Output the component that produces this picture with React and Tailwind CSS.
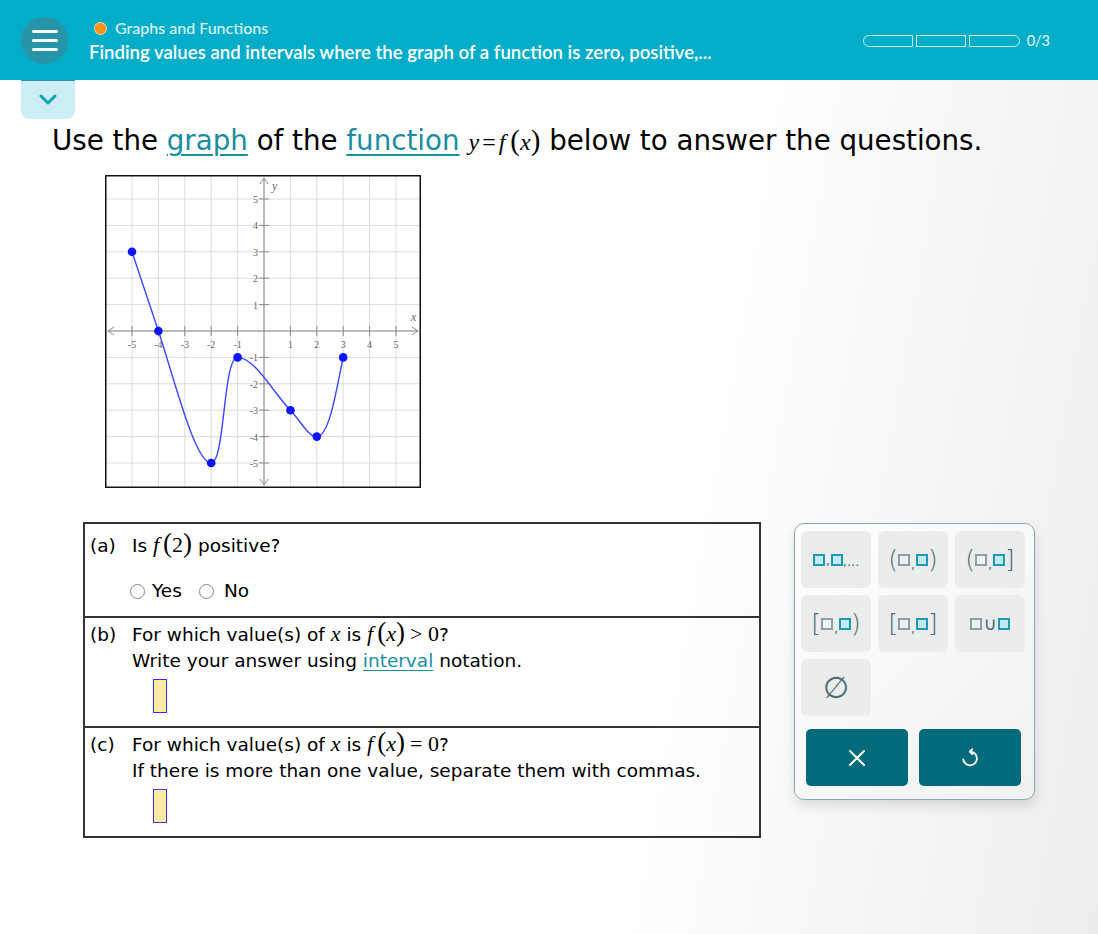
import React from "react";

const U = 26.4;
const OX = 159;
const OY = 156;
const sx = (x) => OX + U * x;
const sy = (y) => OY - U * y;

function Graph() {
  const grid = [];
  for (let i = -6; i <= 6; i++) {
    grid.push(<line key={"v" + i} x1={sx(i)} y1={0} x2={sx(i)} y2={313} stroke="#dcdcdc" strokeWidth="1" />);
    grid.push(<line key={"h" + i} x1={0} y1={sy(i)} x2={316} y2={sy(i)} stroke="#dcdcdc" strokeWidth="1" />);
  }
  const ticks = [];
  const labels = [];
  for (let i = -5; i <= 5; i++) {
    if (i === 0) continue;
    ticks.push(<line key={"tx" + i} x1={sx(i)} y1={OY - 5} x2={sx(i)} y2={OY + 5} stroke="#8a8a8a" strokeWidth="1" />);
    ticks.push(<line key={"ty" + i} x1={OX - 5} y1={sy(i)} x2={OX + 5} y2={sy(i)} stroke="#8a8a8a" strokeWidth="1" />);
    labels.push(
      <text key={"lx" + i} x={sx(i)} y={OY + 17} textAnchor="middle" fontSize="10" fill="#666" fontFamily="Liberation Serif, serif">
        {i < 0 ? "-" + -i : i}
      </text>
    );
    labels.push(
      <text key={"ly" + i} x={OX - 6} y={sy(i) + 4} textAnchor="end" fontSize="10" fill="#666" fontFamily="Liberation Serif, serif">
        {i < 0 ? "-" + -i : i}
      </text>
    );
  }
  const pts = [
    [-5, 3],
    [-4, 0],
    [-2, -5],
    [-1, -1],
    [1, -3],
    [2, -4],
    [3, -1],
  ];
  return (
    <svg width="316" height="313" viewBox="0 0 316 313" className="block">
      <rect x="0" y="0" width="316" height="313" fill="#fff" />
      {grid}
      <line x1="3" y1={OY} x2="313" y2={OY} stroke="#8a8a8a" strokeWidth="1" />
      <line x1={OX} y1="3" x2={OX} y2="310" stroke="#8a8a8a" strokeWidth="1" />
      <path d={`M9 ${OY - 4} L3 ${OY} L9 ${OY + 4}`} fill="none" stroke="#8a8a8a" strokeWidth="1" />
      <path d={`M307 ${OY - 4} L313 ${OY} L307 ${OY + 4}`} fill="none" stroke="#8a8a8a" strokeWidth="1" />
      <path d={`M${OX - 4} 9 L${OX} 3 L${OX + 4} 9`} fill="none" stroke="#8a8a8a" strokeWidth="1" />
      <path d={`M${OX - 4} 304 L${OX} 310 L${OX + 4} 304`} fill="none" stroke="#8a8a8a" strokeWidth="1" />
      {ticks}
      {labels}
      <text x="306" y={OY - 10} fontSize="12" fontStyle="italic" fill="#666" fontFamily="Liberation Serif, serif">x</text>
      <text x={OX + 8} y="15" fontSize="12" fontStyle="italic" fill="#666" fontFamily="Liberation Serif, serif">y</text>
      <path
        d={`M${sx(-5)} ${sy(3)} L${sx(-4)} ${sy(0)} C70 206 90 288 ${sx(-2)} ${sy(-5)} C120 288 118 ${sy(-1)} ${sx(-1)} ${sy(-1)} C150 182.4 170 220 ${sx(1)} ${sy(-3)} C195 245 203 ${sy(-4)} ${sx(2)} ${sy(-4)} C225 261.6 232 210 ${sx(3)} ${sy(-1)}`}
        fill="none"
        stroke="#3b46ff"
        strokeWidth="1.4"
      />
      {pts.map(([x, y]) => (
        <circle key={x} cx={sx(x)} cy={sy(y)} r="4.3" fill="#0a14ff" />
      ))}
      <rect x="0.75" y="0.75" width="314.5" height="311.5" fill="none" stroke="#111" strokeWidth="1.5" />
    </svg>
  );
}

const serif = "font-['Liberation_Serif',serif]";

function F({ children }) {
  return (
    <span className={`${serif} text-[22px] leading-none whitespace-nowrap`}>
      <i>f</i>
      <span className="text-[27px] leading-none ml-[4px]">(</span>
      {children}
      <span className="text-[27px] leading-none">)</span>
    </span>
  );
}

function TealBox() {
  return <span className="inline-block w-[12px] h-[12px] border-2 border-[#1b9ab4] bg-[#c6e9f1]" />;
}
function GrayBox() {
  return <span className="inline-block w-[12px] h-[12px] border-2 border-[#8c9fa7] bg-[#f1f2f2]" />;
}
function Br({ c }) {
  return <span className="text-[25px] leading-none text-[#4c6b77] font-['DejaVu_Sans',sans-serif] font-light">{c}</span>;
}
function Comma() {
  return <span className="text-[13px] text-[#4c6b77] self-end mb-[-2px] mx-[1px]">,</span>;
}

function KeyBtn({ children }) {
  return (
    <div className="h-[57px] w-[70px] rounded-[6px] bg-[#ebecec] flex items-center justify-center">
      <div className="flex items-center">{children}</div>
    </div>
  );
}

export default function App() {
  return (
    <div className="w-[1098px] h-[934px] overflow-hidden bg-[linear-gradient(100deg,#ffffff_62%,#ededed_100%)] font-['DejaVu_Sans',sans-serif] text-black">
      <header className="h-[80px] bg-[#01adc9] flex items-center">
        <div className="ml-[21px] w-[47px] h-[47px] rounded-full bg-[#2894a8] flex flex-col items-center justify-center gap-[6px]">
          <span className="block w-[26px] h-[3px] rounded bg-white" />
          <span className="block w-[26px] h-[3px] rounded bg-white" />
          <span className="block w-[26px] h-[3px] rounded bg-white" />
        </div>
        <div className="ml-[21px] font-['Lato',sans-serif] mt-[4px]">
          <div className="flex items-center h-[20px]">
            <span className="ml-[5px] w-[13px] h-[13px] rounded-full bg-[#f7941d] border border-white/60" />
            <span className="ml-[8px] text-[16px] text-white/85 font-medium">Graphs and Functions</span>
          </div>
          <div className="text-[18.6px] text-white font-semibold leading-[28px]">
            Finding values and intervals where the graph of a function is zero, positive,...
          </div>
        </div>
        <div className="ml-auto mr-[48px] flex items-center mt-[2px]">
          <div className="flex gap-[3px]">
            <span className="w-[50px] h-[12px] border-[1.5px] border-white/80 rounded-l-full" />
            <span className="w-[50px] h-[12px] border-[1.5px] border-white/80" />
            <span className="w-[51px] h-[12px] border-[1.5px] border-white/80 rounded-r-full" />
          </div>
          <span className="ml-[7px] text-[14.5px] text-white/90 font-['Lato',sans-serif]">0/3</span>
        </div>
      </header>
      <div className="ml-[21px] w-[54px] h-[39px] bg-[#cdeef4] rounded-b-[8px] border-t border-[#2a8da0] flex items-center justify-center">
        <svg width="18" height="12" viewBox="0 0 18 12">
          <path d="M2 2 L9 9 L16 2" fill="none" stroke="#139fba" strokeWidth="3" strokeLinecap="round" strokeLinejoin="round" />
        </svg>
      </div>
      <h1 className="ml-[52px] mt-[6px] text-[27.7px] leading-[32px] flex items-baseline whitespace-nowrap">
        <span>Use the&nbsp;</span>
        <span className="text-[#1a8da2] underline underline-offset-[4px] decoration-[1.5px]">graph</span>
        <span>&nbsp;of the&nbsp;</span>
        <span className="text-[#1a8da2] underline underline-offset-[4px] decoration-[1.5px]">function</span>
        <span className={`${serif} text-[24px] ml-[9px] leading-none whitespace-nowrap`}>
          <i>y</i>
          <span className="mx-[3px]">=</span>
          <i>f</i>
          <span className="text-[29px] leading-none ml-[5px]">(</span>
          <i>x</i>
          <span className="text-[29px] leading-none">)</span>
        </span>
        <span>&nbsp;below to answer the questions.</span>
      </h1>
      <div className="ml-[105px] mt-[18px]">
        <Graph />
      </div>
      <div className="flex mt-[34px] ml-[83px]">
        <div className="w-[678px] border-2 border-[#333] text-[18.5px] leading-[26px]">
          <div className="h-[92px] pt-[6px] pl-[5px]">
            <div className="flex items-baseline h-[26px]">
              <span className="w-[42px] shrink-0">(a)</span>
              <span>Is&nbsp;</span>
              <F>2</F>
              <span>&nbsp;positive?</span>
            </div>
            <div className="flex items-center mt-[22px] ml-[40px] h-[26px]">
              <span className="w-[15px] h-[15px] rounded-full border-[1.5px] border-[#888] bg-white" />
              <span className="ml-[7px]">Yes</span>
              <span className="ml-[17px] w-[15px] h-[15px] rounded-full border-[1.5px] border-[#888] bg-white" />
              <span className="ml-[10px]">No</span>
            </div>
          </div>
          <div className="h-[110px] border-t-2 border-[#333] pt-[1px] pl-[5px]">
            <div className="flex items-baseline h-[26px]">
              <span className="w-[42px] shrink-0">(b)</span>
              <span>For which value(s) of&nbsp;</span>
              <i className={`${serif} text-[22px] leading-none`}>x</i>
              <span>&nbsp;is&nbsp;</span>
              <F><i>x</i></F>
              <span className={`${serif} text-[22px] leading-none ml-[5px]`}>&gt;&nbsp;0</span>
              <span>?</span>
            </div>
            <div className="pl-[42px] h-[26px] mt-[3px]">
              Write your answer using <span className="text-[#1a8da2] underline underline-offset-[3px]">interval</span> notation.
            </div>
            <div className="ml-[63px] mt-[5px] w-[14px] h-[34px] bg-[#fde8a6] border border-[#2b33ff]" />
          </div>
          <div className="h-[110px] border-t-2 border-[#333] pt-[1px] pl-[5px]">
            <div className="flex items-baseline h-[26px]">
              <span className="w-[42px] shrink-0">(c)</span>
              <span>For which value(s) of&nbsp;</span>
              <i className={`${serif} text-[22px] leading-none`}>x</i>
              <span>&nbsp;is&nbsp;</span>
              <F><i>x</i></F>
              <span className={`${serif} text-[22px] leading-none ml-[5px]`}>=&nbsp;0</span>
              <span>?</span>
            </div>
            <div className="pl-[42px] h-[26px] mt-[3px]">If there is more than one value, separate them with commas.</div>
            <div className="ml-[63px] mt-[5px] w-[14px] h-[34px] bg-[#fde8a6] border border-[#2b33ff]" />
          </div>
        </div>
        <div className="ml-[33px] mt-[1px] w-[241px] h-[277px] rounded-[10px] border border-[#8ea6af] bg-[linear-gradient(135deg,#ffffff,#f1f1f1)] shadow-[0_6px_12px_rgba(0,0,0,0.12)] pt-[7px] px-[6px]">
          <div className="grid grid-cols-[70px_70px_70px] gap-[7px]">
            <KeyBtn>
              <TealBox />
              <Comma />
              <TealBox />
              <span className="text-[13px] text-[#4c6b77] self-end mb-[-3px]">,...</span>
            </KeyBtn>
            <KeyBtn>
              <Br c="(" />
              <GrayBox />
              <Comma />
              <TealBox />
              <Br c=")" />
            </KeyBtn>
            <KeyBtn>
              <Br c="(" />
              <GrayBox />
              <Comma />
              <TealBox />
              <Br c="]" />
            </KeyBtn>
            <KeyBtn>
              <Br c="[" />
              <GrayBox />
              <Comma />
              <TealBox />
              <Br c=")" />
            </KeyBtn>
            <KeyBtn>
              <Br c="[" />
              <GrayBox />
              <Comma />
              <TealBox />
              <Br c="]" />
            </KeyBtn>
            <KeyBtn>
              <GrayBox />
              <span className="text-[18px] leading-none text-[#4c6b77] mx-[1px]">∪</span>
              <TealBox />
            </KeyBtn>
            <KeyBtn>
              <span className="text-[30px] leading-none text-[#4c6b77]">∅</span>
            </KeyBtn>
          </div>
          <div className="flex gap-[11px] mt-[13px] ml-[5px]">
            <div className="w-[102px] h-[57px] rounded-[5px] bg-[#016a7b] flex items-center justify-center">
              <svg width="18" height="18" viewBox="0 0 18 18">
                <path d="M2 2 L16 16 M16 2 L2 16" stroke="#fff" strokeWidth="2" strokeLinecap="round" />
              </svg>
            </div>
            <div className="w-[102px] h-[57px] rounded-[5px] bg-[#016a7b] flex items-center justify-center">
              <svg width="22" height="22" viewBox="0 0 24 24">
                <path d="M12 5 A7.5 7.5 0 1 1 4.6 13.5" fill="none" stroke="#fff" strokeWidth="2" strokeLinecap="round" />
                <path d="M14.5 2.3 L11.8 5 L14.5 7.7" fill="none" stroke="#fff" strokeWidth="2" strokeLinecap="round" strokeLinejoin="round" />
              </svg>
            </div>
          </div>
        </div>
      </div>
    </div>
  );
}
